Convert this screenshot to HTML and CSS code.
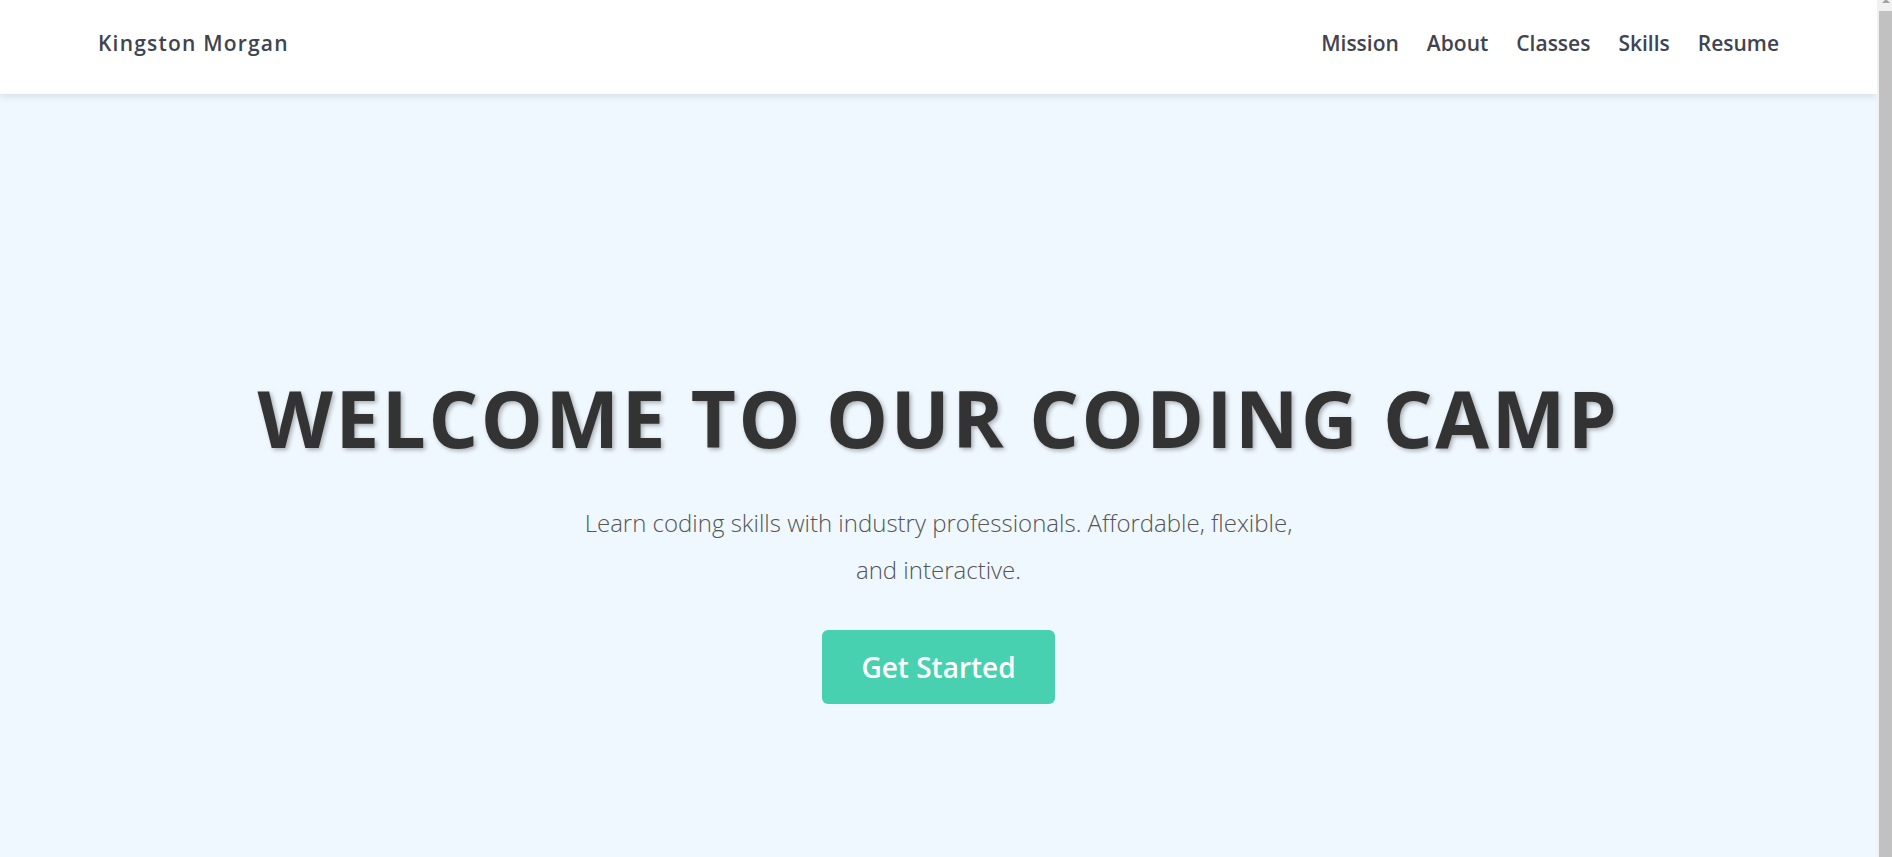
FILE: index.html
```html
<!DOCTYPE html>
<html lang="en">
<head>
<meta charset="utf-8">
<title>Kingston Morgan - Coding Camp</title>
<link rel="stylesheet" href="styles.css">
</head>
<body>
  <header class="site-header">
    <a class="brand" href="#">Kingston Morgan</a>
    <nav class="main-nav">
      <a href="#mission">Mission</a>
      <a href="#about">About</a>
      <a href="#classes">Classes</a>
      <a href="#skills">Skills</a>
      <a href="#resume">Resume</a>
    </nav>
  </header>
  <main>
    <section class="hero">
      <h1 class="hero-title">WELCOME TO OUR CODING CAMP</h1>
      <p class="hero-text">Learn coding skills with industry professionals. Affordable, flexible, and interactive.</p>
      <a class="hero-button" href="#classes">Get Started</a>
    </section>
  </main>
  <div class="scrollbar" aria-hidden="true">
    <span class="scrollbar-arrow"></span>
    <span class="scrollbar-thumb"></span>
  </div>
</body>
</html>
```

FILE: styles.css
```css
* { box-sizing: border-box; }

html, body {
  margin: 0;
  padding: 0;
}

html {
  background: #f1f1f1;
  scrollbar-width: none;
}

body {
  margin-right: 15px;
  font-family: "Open Sans", "Noto Sans", sans-serif;
  background: #f0f8ff;
  color: #333;
}

a { text-decoration: none; }

/* emulated browser scrollbar */
.scrollbar {
  position: fixed;
  top: 0;
  right: 0;
  bottom: 0;
  width: 15px;
  background: #f1f1f1;
  z-index: 10;
}

.scrollbar-arrow {
  position: absolute;
  top: -1px;
  right: 2px;
  width: 0;
  height: 0;
  border-left: 4px solid transparent;
  border-right: 4px solid transparent;
  border-bottom: 4px solid #a3a3a3;
}

.scrollbar-thumb {
  position: absolute;
  top: 11px;
  right: 0;
  bottom: -40px;
  width: 13px;
  background: #c1c1c1;
}

.site-header {
  position: relative;
  z-index: 2;
  height: 94px;
  padding: 0 98px 8px;
  display: flex;
  align-items: center;
  justify-content: space-between;
  background: #fff;
  box-shadow: 0 2px 8px rgba(0, 0, 0, 0.12);
}

.brand {
  color: #3f4450;
  font-size: 21px;
  font-weight: 600;
  letter-spacing: 1.2px;
}

.main-nav {
  display: flex;
  gap: 28px;
}

.main-nav a {
  color: #3f4450;
  font-size: 21px;
  font-weight: 600;
}

.hero {
  min-height: 100vh;
  display: flex;
  flex-direction: column;
  align-items: center;
  justify-content: center;
  text-align: center;
  padding: 24px 20px 0;
}

.hero-title {
  margin: 0 0 28px;
  font-size: 78px;
  font-weight: 700;
  letter-spacing: 2.6px;
  color: #333;
  text-shadow: 2px 2px 4px rgba(0, 0, 0, 0.3);
  line-height: 106px;
}

.hero-text {
  margin: 0 0 37px;
  max-width: 730px;
  font-size: 24px;
  font-weight: 300;
  line-height: 47px;
  color: #555;
}

.hero-button {
  display: inline-block;
  padding: 18px 39px;
  border-radius: 6px;
  background: #48d1b0;
  color: #fff;
  font-size: 28px;
  font-weight: 600;
  line-height: 38px;
}
```
